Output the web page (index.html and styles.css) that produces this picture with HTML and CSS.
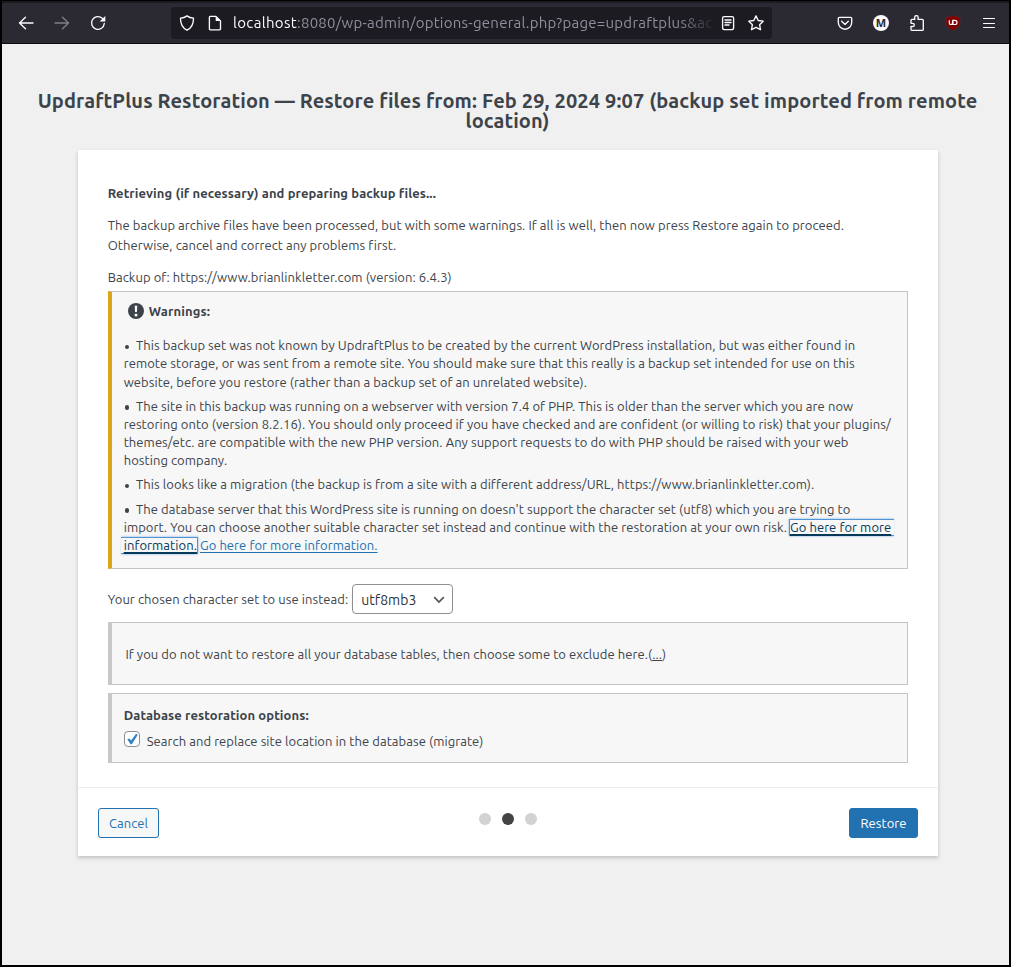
FILE: index.html
```html
<!DOCTYPE html>
<html lang="en">
<head>
<meta charset="utf-8">
<title>UpdraftPlus Restoration</title>
<link rel="stylesheet" href="styles.css">
</head>
<body>
<div class="window">
  <header class="toolbar">
    <nav class="nav">
      <svg class="ico" viewBox="0 0 16 16"><path d="M15 8H1.500M7.500 2.200L1.500 8l6 5.800"/></svg>
      <svg class="ico dim" viewBox="0 0 16 16"><path d="M1 8h13.500M8.500 2.200L14.500 8l-6 5.800"/></svg>
      <svg class="ico" viewBox="0 0 16 16"><path d="M14.300 8.500A6.400 6.400 0 1 1 12.300 3.300"/><path class="solid" d="M15.300 1v5.600H9.700z"/></svg>
    </nav>
    <div class="urlbar">
      <svg class="ico" viewBox="0 0 16 16"><path d="M8 .9c2 1.500 4.300 2.100 6.500 2.300C14.600 8.500 13.300 12.500 8 15.200 2.700 12.500 1.400 8.500 1.500 3.200 3.700 3 6 2.400 8 .9z"/></svg>
      <svg class="ico page" viewBox="0 0 16 16"><path d="M3.200 1.400h5.800l4.500 4.500v8.200a.8.8 0 0 1-.8.8h-9.500a.8.8 0 0 1-.8-.8V2.200a.8.8 0 0 1 .8-.8z"/><path class="solid" d="M8.700 1.400v4.700h4.800z"/></svg>
      <div class="url"><span class="host">localhost</span>:8080/wp-admin/options-general.php?page=updraftplus&amp;ac</div>
      <svg class="ico reader" viewBox="0 0 16 16"><rect x="2.600" y="1.600" width="11" height="13" rx="1.500"/><path d="M5 5h6M5 7.500h6M5 10h4"/></svg>
      <svg class="ico" viewBox="0 0 16 16"><path d="M8 .9l2.200 4.600 5 .7-3.600 3.500.9 5L8 12.300l-4.500 2.400.9-5L.8 6.200l5-.7z"/></svg>
    </div>
    <div class="tools">
      <svg class="ico" viewBox="0 0 16 16"><path d="M2.500 2.300h11a1.200 1.200 0 0 1 1.200 1.200V7.500a6.700 6.700 0 0 1-13.400 0V3.500a1.200 1.200 0 0 1 1.200-1.200z"/><path d="M4.700 6.300L8 9.400l3.300-3.100"/></svg>
      <span class="avatar">M</span>
      <svg class="ico puzzle" viewBox="0 0 16 16"><path d="M5.700 4.400V2.300a1.700 1.700 0 0 1 3.400 0v2.100h4.200a1 1 0 0 1 1 1v9.200a.7.700 0 0 1-.7.700H2.700a.7.700 0 0 1-.7-.7V11.500h1.700a1.600 1.600 0 0 0 0-3.200H2V5.400a1 1 0 0 1 1-1z"/></svg>
      <svg class="ublock" viewBox="0 0 16 16"><path class="shield" d="M8 .3c2 1.300 4.300 1.900 7 2v4.800c0 4-3.200 6.700-7 8.600C4.200 13.800 1 11.100 1 7.100V2.300C3.700 2.200 6 1.600 8 .3z"/><path class="mark" d="M4.300 5.200v2.700a1.600 1.600 0 0 0 3.200 0V5.200M9.900 5.300a2 2 0 1 1 0 4.200H8V5.300z"/></svg>
      <svg class="ico menu" viewBox="0 0 16 16"><path d="M2.500 3.500h11M2.500 8.500h11M2.500 12.500h11"/></svg>
    </div>
  </header>
  <main class="content">
    <h1>UpdraftPlus Restoration — Restore files from: Feb 29, 2024 9:07 (backup set imported from remote<br>location)</h1>
    <section class="card">
      <div class="body">
        <p><b>Retrieving (if necessary) and preparing backup files...</b></p>
        <p>The backup archive files have been processed, but with some warnings. If all is well, then now press Restore again to proceed.<br>Otherwise, cancel and correct any problems first.</p>
        <p class="of">Backup of: https://www.brianlinkletter.com (version: 6.4.3)</p>
        <div class="notice warn">
          <div class="wtitle"><svg viewBox="0 0 16 16"><circle cx="8" cy="8" r="8"/><path d="M6.700 2.800h2.600L8.900 9H7.100z"/><circle class="dot" cx="8" cy="11.900" r="1.500"/></svg><b>Warnings:</b></div>
          <ul>
            <li><i></i>This backup set was not known by UpdraftPlus to be created by the current WordPress installation, but was either found in<br>remote storage, or was sent from a remote site. You should make sure that this really is a backup set intended for use on this<br>website, before you restore (rather than a backup set of an unrelated website).</li>
            <li><i></i>The site in this backup was running on a webserver with version 7.4 of PHP. This is older than the server which you are now<br>restoring onto (version 8.2.16). You should only proceed if you have checked and are confident (or willing to risk) that your plugins/<br>themes/etc. are compatible with the new PHP version. Any support requests to do with PHP should be raised with your web<br>hosting company.</li>
            <li><i></i>This looks like a migration (the backup is from a site with a different address/URL, https://www.brianlinkletter.com).</li>
            <li><i></i>The database server that this WordPress site is running on doesn't support the character set (utf8) which you are trying to<br>import. You can choose another suitable character set instead and continue with the restoration at your own risk. <a class="focus first">Go here for more</a><br><a class="focus last">information.</a> <a>Go here for more information.</a></li>
          </ul>
        </div>
        <div class="charset">Your chosen character set to use instead:<div class="select">utf8mb3<svg viewBox="0 0 12 8"><path d="M1.200 1.200L6 6l4.800-4.800"/></svg></div></div>
        <div class="notice tables">If you do not want to restore all your database tables, then choose some to exclude here.(<u>...</u>)</div>
        <div class="notice options"><b>Database restoration options:</b>
          <div class="check"><span class="box"><svg viewBox="0 0 16 16"><path d="M2.600 8.200l2.500-.9 1.900 2.400L12.600 2l2 1L7.900 14H6.300z"/></svg></span><span>Search and replace site location in the database (migrate)</span></div></div>
      </div>
      <footer class="foot">
        <button class="btn">Cancel</button>
        <div class="dots"><i></i><i class="on"></i><i></i></div>
        <button class="btn primary">Restore</button>
      </footer>
    </section>
  </main>
</div>
</body>
</html>
```
FILE: styles.css
```css
* { box-sizing: border-box; }
body { margin: 0; background: #000; font: 13px/20px Ubuntu, "Noto Sans", sans-serif; letter-spacing: .066px; color: #3c434a; }
b { letter-spacing: .094px; }
.window { width: 1011px; height: 967px; border: 2px solid #000; border-top-width: 1px; background: #f0f0f0; overflow: hidden; }
.toolbar { height: 43px; display: flex; align-items: center; background: #2b2a33; border-top: 2px solid #1c1b22; border-bottom: 1px solid #0c0c0d; }
.ico { width: 16px; height: 16px; flex: none; fill: none; stroke: #fbfbfe; stroke-width: 1.35; stroke-linecap: round; stroke-linejoin: round; }
.ico .solid { fill: #fbfbfe; stroke: none; }
.dim { opacity: .4; }
.menu { stroke-width: 1.1; }
.nav { display: flex; gap: 20px; padding-left: 16px; width: 169px; }
.urlbar { width: 601px; height: 32px; background: #1c1b22; border-radius: 4px; display: flex; align-items: center; padding: 0 8px; }
.page { margin-left: 12px; }
.url { width: 483px; margin-left: 10px; overflow: hidden; white-space: nowrap; font-size: 15px; letter-spacing: .25px; color: #8f8f9d; mask-image: linear-gradient(90deg, #000 445px, transparent 483px); }
.host { color: #fbfbfe; letter-spacing: .33px; }
.reader { margin: 0 12px 0 4px; }
.tools { display: flex; align-items: center; gap: 20px; margin-left: 65px; }
.avatar { width: 16px; height: 16px; border-radius: 50%; background: #fbfbfe; color: #2b2a33; font: bold 11px/16px "Noto Sans", sans-serif; letter-spacing: 0; text-align: center; }
.ublock { width: 16px; height: 16px; }
.ublock .shield { fill: #800000; stroke: #5c2a30; stroke-width: .6; }
.ublock .mark { fill: none; stroke: #fff; stroke-width: 1.2; }
.content { padding-top: 47px; white-space: nowrap; }
h1 { margin: 0 0 19px; padding-left: 4px; font-size: 20px; line-height: 20px; letter-spacing: .13px; text-align: center; }
.card { width: 860px; margin: 0 auto 0 76px; background: #fff; box-shadow: 0 2px 4px rgba(0,0,0,.2); height: 706px; }
.body { height: 638px; padding: 33px 30px 0 29.700px; border-bottom: 1px solid #ededed; }
p { margin: 0 0 12px; }
p.of { margin-bottom: 4px; }
.notice { width: 800px; background: #f7f7f7; border: 1px solid #c3c4c7; border-left: 4px solid #c8c8c8; }
.warn { height: 278px; border-left-color: #dba617; padding: 9px 0 0 12px; }
.wtitle { display: flex; align-items: center; gap: 5px; padding-left: 4px; }
.wtitle b { letter-spacing: .15px; }
.wtitle svg { width: 16px; height: 16px; fill: #3c434a; }
.wtitle path, .wtitle .dot { fill: #fff; }
ul { list-style: none; margin: 15px 0 0; padding: 0; line-height: 18.250px; }
li { margin-bottom: 5.850px; }
li i { display: inline-block; width: 4.500px; height: 4.500px; border-radius: 50%; background: #3c434a; margin: 0 6.500px 1px 1.300px; }
a { color: #2271b1; text-decoration: underline; text-underline-offset: 2px; }
.focus { color: #043959; border: 1px solid #4f94d4; box-shadow: 0 0 2px rgba(79,148,212,.8); text-decoration-thickness: 1.500px; }
.first { border-right: 0; padding-right: 3px; margin-left: -1px; clip-path: inset(-3px 0 -3px -3px); display: inline-block; line-height: 15px; }
.last { border-left: 0; padding-left: 3px; margin: 0 -1px 0 -3px; clip-path: inset(-3px -3px -3px 0); display: inline-block; line-height: 15px; }
.charset { height: 30px; margin: 15px 0 8px; display: flex; align-items: center; gap: 4px; }
.select { width: 101px; height: 30px; border: 1px solid #8c8f94; border-radius: 4px; display: flex; align-items: center; justify-content: space-between; padding: 2px 7px 0 8px; font-size: 14px; letter-spacing: .02px; color: #2c3338; }
.select svg { width: 12px; height: 8px; fill: none; stroke: #555; stroke-width: 1.700; }
.tables { height: 63px; padding: 21px 0 0 13.700px; }
.options { height: 70px; margin-top: 8px; padding: 11px 0 0 12px; }
.check { display: flex; gap: 7px; padding-top: 6px; }
.box { width: 16px; height: 16px; border: 1px solid #8c8f94; border-radius: 4px; background: #fff; display: flex; }
.box svg { width: 14px; height: 14px; fill: #3582c4; }
.foot { height: 68px; padding: 20px 20px 0; display: grid; grid-template-columns: 1fr auto 1fr; align-items: start; }
.btn { justify-self: start; height: 30px; border: 1px solid #2271b1; border-radius: 3px; background: #f6f7f7; color: #2271b1; font: 13px/28px Ubuntu, "Noto Sans", sans-serif; letter-spacing: .05px; padding: 0 10px; }
.primary { justify-self: end; width: 69px; padding: 0; background: #2271b1; color: #fff; }
.dots { display: flex; gap: 11px; padding-top: 5px; }
.dots i { width: 12px; height: 12px; border-radius: 50%; background: #d2d2d2; }
.dots .on { background: #444; }
```
